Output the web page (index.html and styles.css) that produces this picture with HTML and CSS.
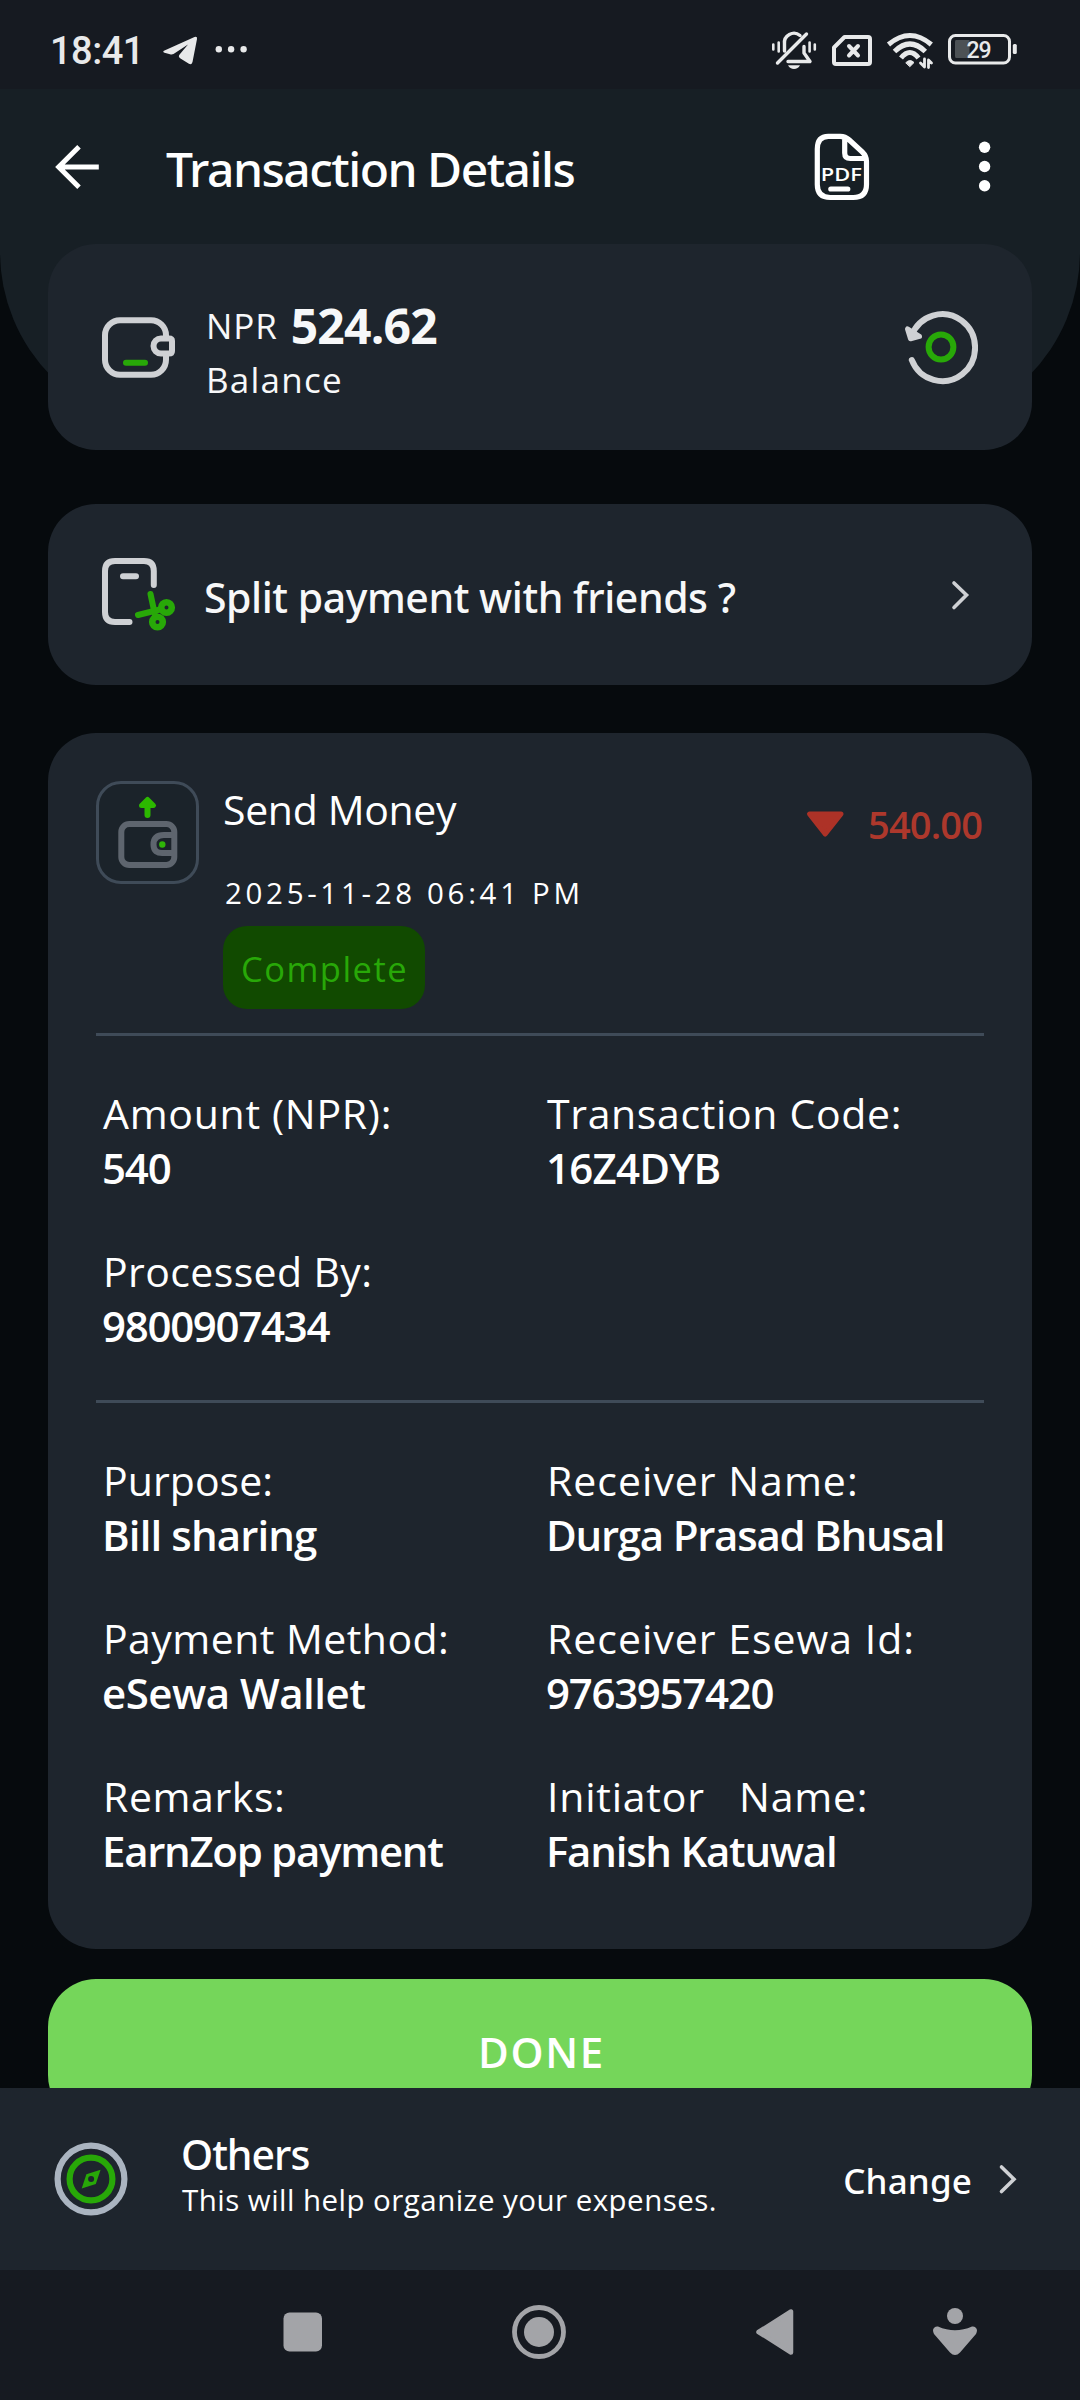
FILE: index.html
```html
<!DOCTYPE html>
<html lang="en">
<head>
<meta charset="utf-8">
<title>Transaction Details</title>
<link rel="stylesheet" href="styles.css">
</head>
<body>
<div class="screen">
  <div class="status">
    <span class="clock">18:41</span>
    <svg class="tg" width="36" height="32" viewBox="162 34 36 32"><path d="M164.500 50.500 194.500 37Q197.500 36 197 39L192.500 62Q191.500 65.500 188.500 63.500L180.500 58.500Q177.500 56.500 180 54L188 44.500 173.500 54Q172 54.800 170 54.300L164.500 52.700Q162 51.700 164.500 50.500Z" fill="#e8e9ea"/></svg>
    <svg class="more" width="32" height="32" viewBox="215 34 32 32" fill="#e8e9ea"><circle cx="218.800" cy="49.300" r="3.200"/><circle cx="231.100" cy="49.300" r="3.200"/><circle cx="243.600" cy="49.300" r="3.200"/></svg>
    <svg class="tray" width="250" height="44" viewBox="770 28 250 44" fill="none" stroke="#e8e9ea" stroke-width="3.400" stroke-linecap="round" stroke-linejoin="round">
      <path d="M784.500 51V44A9.500 9.500 0 0 1 800 35.500M804 46.500V53L810 61.500H788M806.500 34 777.500 63"/>
      <path d="M788 65.200H800Q798 69 794 69T788 65.200Z" fill="#e8e9ea" stroke="none"/>
      <path d="M773.300 44.500V49.500M778.700 42.500V51.500M809.600 42.500V51.500M814.800 44.500V49.500" stroke-width="2.600"/>
      <path d="M844.500 37H868Q870 37 870 39V62Q870 64 868 64H836Q834 64 834 62V47.500Z" stroke-width="4"/>
      <path d="M849 46 858 55.500M858 46 849 55.500" stroke-width="4"/>
      <path d="M888.500 44.500Q909.900 26.500 931.300 44.500M894.500 51.500Q909.900 36.500 925.300 51.500M901 58Q909.900 47 918.500 58" stroke-width="5" stroke-linecap="butt"/>
      <path d="M906 62.500Q910 58.500 914 62.500L910 66.500Z" fill="#e8e9ea" stroke-width="1"/>
      <path d="M924.500 59V67L920.500 63M928.500 67.500V60L931.500 63" stroke-width="2.800"/>
      <rect x="949.500" y="35.500" width="60" height="27.500" rx="6" stroke-width="3"/>
      <path d="M956 40H969.500V58H956Q955 58 955 56V42Q955 40 956 40Z" fill="#4c5155" stroke="none"/>
      <rect x="1012.800" y="44" width="4" height="10" rx="1.500" fill="#e8e9ea" stroke="none"/>
      <text class="pct" x="966.500" y="58" textLength="25" fill="#e8e9ea" stroke="none">29</text>
    </svg>
  </div>

  <main class="content">
    <header class="appbar">
      <svg class="back" width="46" height="46" viewBox="54 144 46 46" fill="none" stroke="#fff" stroke-width="5"><path d="M98.800 167H58.500M79 146.800 58.700 167 79 187.200"/></svg>
      <h1 class="title">Transaction Details</h1>
      <svg class="pdf" width="56" height="70" viewBox="813.700 131.500 56 70" fill="none" stroke="#fff" stroke-width="5.200" stroke-linecap="round">
        <path d="M828 135.800H840Q845 135.800 849 139.500L862 151.500Q866.200 155.500 866.200 161V184Q866.200 197 853 197H830Q817 197 817 184V148.500Q817 135.800 828 135.800ZM844.400 138V152.500Q844.400 158 850 158H865M830.500 188.500H847.500"/>
        <text class="pdf-label" x="820.500" y="180" textLength="41" lengthAdjust="spacingAndGlyphs" fill="#fff" stroke="none">PDF</text>
      </svg>
      <svg class="kebab" width="14" height="54" viewBox="978 140 14 54" fill="#fff"><circle cx="984.600" cy="147.300" r="5.700"/><circle cx="984.600" cy="166.500" r="5.700"/><circle cx="984.600" cy="185.800" r="5.700"/></svg>
    </header>

    <section class="card balance">
      <svg width="74" height="74" viewBox="102 310 74 74" fill="none" stroke="#cfd1d4" stroke-width="6"><rect x="105" y="320.200" width="61" height="54.500" rx="15"/><path d="M161 338.500H169Q172 338.500 172 341V351Q172 353.500 169 353.500H161A7.500 7.500 0 0 1 161 338.500Z" fill="#1e252d"/><path d="M126 362.800H145" stroke="#28a808" stroke-linecap="round"/></svg>
      <div class="balance-text">
        <div class="money"><span class="currency">NPR</span><strong class="total">524.62</strong></div>
        <div class="caption">Balance</div>
      </div>
      <svg width="74" height="76" viewBox="904.500 309.500 74 76" fill="none" stroke="#cfd1d4" stroke-width="6" stroke-linecap="round" stroke-linejoin="round"><path d="M912.300 360.500A32.800 33.500 0 1 0 912 336.500"/><path d="M908 329.500 911 339.300 920 336.800Z" fill="#cfd1d4" stroke-width="5"/><circle cx="941.500" cy="347.500" r="12.400" stroke="#28a808"/></svg>
    </section>

    <section class="card split">
      <svg width="74" height="76" viewBox="102 557 74 76" fill="none" stroke="#cfd1d4" stroke-width="6" stroke-linecap="round"><path d="M153.800 585V571Q153.800 561 144 561H115Q105 561 105 571V612Q105 622 115 622H129.500M123 576.300H136"/><g stroke="#28a808"><path d="M150.500 594 155 615M138 615 160 609.500"/><circle cx="157.500" cy="622" r="5.300" stroke-width="6.600"/><circle cx="166.500" cy="607.500" r="5.300" stroke-width="6.600"/></g></svg>
      <span class="split-label">Split payment with friends ?</span>
      <svg class="chevron" width="20" height="32" viewBox="951 579 20 32"><path d="M954 583 966.500 595 954 607.500"/></svg>
    </section>

    <section class="card details">
      <div class="head">
        <div class="thumb">
          <svg width="97" height="97" viewBox="99 784 97 97" fill="none" stroke="#5e656e" stroke-width="6"><rect x="121.300" y="824" width="53" height="41" rx="8"/><path d="M174 835H164Q153.500 835 153.500 844.500T164 853H174"/><circle cx="162.300" cy="844.500" r="3.200" fill="#2fb508" stroke="none"/><path d="M147.500 815V803" stroke="#2cb800" stroke-linecap="round"/><path d="M141.500 805.500 147.500 799.500 153.500 805.500Z" fill="#2cb800" stroke="#2cb800" stroke-width="5" stroke-linejoin="round"/></svg>
        </div>
        <div class="summary">
          <div class="kind">Send Money</div>
          <div class="date">2025-11-28 06:41 PM</div>
          <div class="badge">Complete</div>
        </div>
        <div class="amount">
          <svg width="40" height="28" viewBox="805.500 809.500 40 28"><path d="M810 813.500H841.500L825.700 833.500Z" fill="#ad3227" stroke="#ad3227" stroke-width="5" stroke-linejoin="round"/></svg>
          <span class="debit">540.00</span>
        </div>
      </div>
      <dl class="fields">
        <div><dt class="amt">Amount (NPR):</dt><dd class="v540">540</dd></div>
        <div><dt class="code">Transaction Code:</dt><dd class="vcode">16Z4DYB</dd></div>
        <div><dt class="proc">Processed By:</dt><dd class="num">9800907434</dd></div>
      </dl>
      <dl class="fields">
        <div><dt class="purp">Purpose:</dt><dd class="vbill">Bill sharing</dd></div>
        <div><dt class="recv">Receiver Name:</dt><dd>Durga Prasad Bhusal</dd></div>
        <div><dt class="meth">Payment Method:</dt><dd class="vwallet">eSewa Wallet</dd></div>
        <div><dt class="recv">Receiver Esewa Id:</dt><dd class="num">9763957420</dd></div>
        <div><dt class="rem">Remarks:</dt><dd class="vrem">EarnZop payment</dd></div>
        <div><dt class="init">Initiator&nbsp;&nbsp; Name:</dt><dd>Fanish Katuwal</dd></div>
      </dl>
    </section>

    <button class="done">DONE</button>
  </main>

  <section class="category">
    <svg width="74" height="74" viewBox="53.600 2142.300 74 74" fill="none" stroke="#aab4c0" stroke-width="6.200"><circle cx="90.600" cy="2179.300" r="33.400"/><circle cx="90.600" cy="2179.300" r="21.400" stroke="#28a808"/><path d="M100.200 2170 95.400 2184.200 81.300 2188.800 86 2174.500Z" fill="#28a808" stroke="none"/><circle cx="90.700" cy="2179.300" r="3" fill="#1e252d" stroke="none"/></svg>
    <div class="category-text">
      <div class="category-name">Others</div>
      <div class="hint">This will help organize your expenses.</div>
    </div>
    <span class="change">Change</span>
    <svg class="chevron" width="20" height="32" viewBox="998.500 2163 20 32"><path d="M1002 2167 1014.500 2179.200 1002 2191.500"/></svg>
  </section>

  <nav class="navbar">
    <svg width="40" height="40" viewBox="0 0 40 40"><rect x=".5" y=".5" width="38.500" height="39" rx="6"/></svg>
    <svg width="56" height="56" viewBox="0 0 56 56"><circle cx="28" cy="28" r="24.500" fill="none" stroke="#a3a4a8" stroke-width="4.800"/><circle cx="28" cy="28" r="15"/></svg>
    <svg width="40" height="48" viewBox="754 2308 40 48"><path d="M757.500 2332 790 2311.500V2352.500Z" stroke="#a3a4a8" stroke-width="4.500" stroke-linejoin="round"/></svg>
    <svg class="assist" width="46" height="52" viewBox="932 2306 46 52"><circle cx="955" cy="2316" r="8"/><path d="M938 2326.500Q955 2334 972 2326.500 976 2326 977 2330 977 2332 976 2334L960 2352.500Q955 2357.500 950 2352.500L934 2334Q933 2332 933 2330 934 2326 938 2326.500Z"/></svg>
  </nav>
</div>
</body>
</html>
```
FILE: styles.css
```css
* { box-sizing: border-box; margin: 0; padding: 0; }
svg { display: block; flex: none; }

.screen {
  display: flex;
  flex-direction: column;
  width: 1080px;
  height: 2400px;
  overflow: hidden;
  background: #060a0d;
  color: #fff;
  font-family: "Open Sans", "Noto Sans", sans-serif;
  white-space: nowrap;
}

/* system status bar */
.status {
  display: flex;
  align-items: center;
  height: 89px;
  padding: 11px 60px 0 50px;
  background: #161a21;
  flex: none;
}
.clock { width: 88px; margin: 2px 24px 0 0; color: #e8e9ea; font: 500 38px/44px Roboto, sans-serif; letter-spacing: -0.5px; }
.more { margin-left: 17px; }
.tray { margin-left: auto; }
.pct { font: 500 23px Roboto, sans-serif; }

/* page area with the rounded header backdrop */
.content { position: relative; z-index: 0; flex: 1; min-height: 0; padding: 0 48px; overflow: hidden; }
.content::before {
  content: "";
  position: absolute;
  z-index: -1;
  inset: 0 0 auto;
  height: 339px;
  border-radius: 0 0 176px 176px;
  background: #171f25;
}
.appbar { display: flex; align-items: center; height: 155px; padding: 0 40px 0 6px; }
.title { margin: 4px auto 0 66px; font: 500 48px/60px "Noto Sans", sans-serif; letter-spacing: -1.5px; }
.pdf-label { font: 600 18.5px "Open Sans", sans-serif; }
.kebab { margin-left: 108px; }

.card { display: flex; align-items: center; padding: 0 54px; border-radius: 48px; background: #1e252d; }
.chevron { fill: none; stroke: #cfd1d4; stroke-width: 3.6px; stroke-linecap: round; }

.balance { height: 206px; color: #f7f8f9; }
.balance-text { margin: 11px auto 0 30px; }
.money { display: flex; align-items: center; line-height: 55px; }
.currency { margin-top: -1px; font-size: 35px; letter-spacing: 0.9px; }
.total { margin-left: 13px; font-size: 48px; letter-spacing: -0.8px; }
.caption { font-size: 35px; line-height: 54px; letter-spacing: 1.24px; }

.split { height: 181px; margin-top: 54px; padding-right: 61px; color: #f7f8f9; }
.split-label { margin: 4px auto 0 28px; font: 500 41px/56px "Noto Sans", sans-serif; letter-spacing: -0.45px; }

.details { display: block; height: 1216px; margin-top: 48px; padding: 48px 48px 0; }
.head { display: flex; height: 252px; }
.thumb { width: 103px; height: 103px; border: 3px solid #3f4b58; border-radius: 25px; background: #1b232a; }
.summary { margin: 0 auto 0 24px; }
.kind { font-size: 41px; line-height: 56px; letter-spacing: -0.34px; }
.date { margin: 36px 0 13px 2px; font-size: 29.5px; line-height: 40px; letter-spacing: 3.68px; }
.badge { width: 202px; height: 83px; padding-left: 1px; border-radius: 24px; background: #114a00; color: #28a808; font-size: 34.5px; line-height: 86px; letter-spacing: 1.48px; text-align: center; }
.amount { display: flex; align-items: center; gap: 23px; height: 86px; padding-right: 2px; }
.debit { color: #ad382c; font-size: 38px; font-weight: 600; letter-spacing: -0.86px; }

.fields { display: grid; grid-template-columns: 444px 1fr; row-gap: 49px; padding: 50px 0 47px 7px; border-top: 3px solid #3f4b58; }
dt { font-size: 41px; line-height: 54px; }
dd { margin-left: -1px; font-size: 42px; line-height: 55px; font-weight: 600; letter-spacing: -1.25px; }
.amt { letter-spacing: 0.71px; }
.code { letter-spacing: 0.65px; }
.proc { letter-spacing: 0.39px; }
.purp { letter-spacing: 0.06px; }
.recv { letter-spacing: 1px; }
.meth { letter-spacing: 0.45px; }
.rem { letter-spacing: 0.6px; }
.init { letter-spacing: 0.78px; }
.v540 { letter-spacing: -1.2px; }
.vcode { letter-spacing: -0.74px; }
.num { letter-spacing: -1.3px; }
.vbill { letter-spacing: -0.88px; }
.vwallet { letter-spacing: -0.5px; }
.vrem { letter-spacing: -1.3px; }

.done {
  display: block;
  width: 100%;
  height: 144px;
  margin-top: 30px;
  padding-left: 3px;
  border: 0;
  border-radius: 48px;
  background: #75d65a;
  color: #fff;
  font: 600 42px "Open Sans", sans-serif;
  letter-spacing: 1.7px;
}

/* expense category bar */
.category { display: flex; align-items: center; height: 182px; padding: 0 62px 0 54px; background: #1e252d; flex: none; }
.category-text { margin: -8px auto 0 53px; }
.category-name { font: 500 41px/50px "Noto Sans", sans-serif; letter-spacing: -1px; }
.hint { margin-left: 1px; font-size: 29.5px; line-height: 42px; letter-spacing: 0.46px; }
.change { margin: 3px 26px 0 0; font: 500 35px/48px "Noto Sans", sans-serif; letter-spacing: 0.15px; }

/* system navigation */
.navbar { display: flex; align-items: center; gap: 188px; height: 130px; padding: 0 0 6px 283px; background: #161a21; fill: #a3a4a8; flex: none; }
.navbar .assist { margin-left: -51px; }
```
